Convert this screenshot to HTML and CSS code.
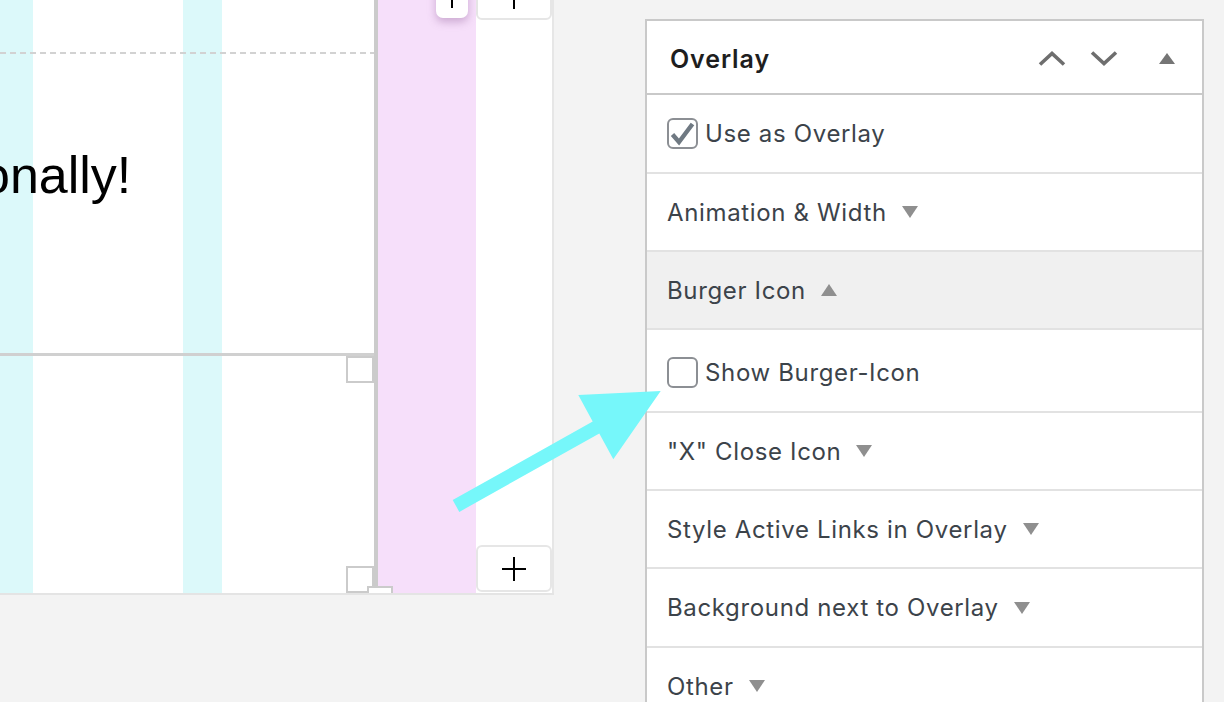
FILE: index.html
```html
<!DOCTYPE html>
<html lang="en">
<head>
<meta charset="utf-8">
<title>Overlay settings</title>
<link rel="stylesheet" href="styles.css">
</head>
<body>
<div class="page">
  <div class="canvas">
    <div class="editor">
      <div class="block-top">
        <div class="dash"></div>
        <p class="big">onally!</p>
      </div>
      <div class="block-bottom">
        <span class="handle handle-tr"></span>
        <span class="handle handle-br"></span>
        <span class="tab-bottom"></span>
      </div>
    </div>
    <div class="pink">
      <span class="float-tab">
        <svg class="plus-sm" viewBox="0 0 20 20" width="20" height="20"><path d="M10 0V20M0 10H20" stroke="#000" stroke-width="2"/></svg>
      </span>
    </div>
    <div class="side">
      <div class="add add-top">
        <svg viewBox="0 0 24 24" width="24" height="24"><path d="M12 0V24M0 12H24" stroke="#000" stroke-width="2"/></svg>
      </div>
      <div class="add add-bottom">
        <svg viewBox="0 0 24 24" width="24" height="24"><path d="M12 0V24M0 12H24" stroke="#000" stroke-width="2"/></svg>
      </div>
    </div>
  </div>

  <aside class="panel">
    <div class="panel-head">
      <h2 class="panel-title">Overlay</h2>
      <div class="head-icons">
        <svg class="chev" viewBox="0 0 28 15" width="28" height="15"><polyline points="2,13.5 14,2.5 26,13.5" fill="none" stroke="#6e6e6e" stroke-width="3.6"/></svg>
        <svg class="chev chev-down" viewBox="0 0 28 15" width="28" height="15"><polyline points="2,1.5 14,12.5 26,1.5" fill="none" stroke="#6e6e6e" stroke-width="3.6"/></svg>
        <svg class="head-tri" viewBox="0 0 16 11" width="16" height="11"><polygon points="8,0 16,11 0,11" fill="#757575"/></svg>
      </div>
    </div>
    <div class="row row-first">
      <span class="checkbox">
        <svg viewBox="0 0 27 27" width="27" height="27"><path d="M3.5 14.5 L10 22 L23.5 4" fill="none" stroke="#6f7982" stroke-width="4.4" stroke-linejoin="miter"/></svg>
      </span>
      <span>Use as Overlay</span>
    </div>
    <div class="row">
      <span>Animation &amp; Width</span>
      <svg class="caret" viewBox="0 0 16 12" width="16" height="12"><polygon points="0,0 16,0 8,12" fill="#8f8f8f"/></svg>
    </div>
    <div class="row row-open">
      <span>Burger Icon</span>
      <svg class="caret" viewBox="0 0 16 12" width="16" height="12"><polygon points="8,0 16,12 0,12" fill="#8f8f8f"/></svg>
    </div>
    <div class="row row-tall">
      <span class="checkbox"></span>
      <span>Show Burger-Icon</span>
    </div>
    <div class="row">
      <span>"X" Close Icon</span>
      <svg class="caret" viewBox="0 0 16 12" width="16" height="12"><polygon points="0,0 16,0 8,12" fill="#8f8f8f"/></svg>
    </div>
    <div class="row">
      <span>Style Active Links in Overlay</span>
      <svg class="caret" viewBox="0 0 16 12" width="16" height="12"><polygon points="0,0 16,0 8,12" fill="#8f8f8f"/></svg>
    </div>
    <div class="row row-79">
      <span>Background next to Overlay</span>
      <svg class="caret" viewBox="0 0 16 12" width="16" height="12"><polygon points="0,0 16,0 8,12" fill="#8f8f8f"/></svg>
    </div>
    <div class="row">
      <span>Other</span>
      <svg class="caret" viewBox="0 0 16 12" width="16" height="12"><polygon points="0,0 16,0 8,12" fill="#8f8f8f"/></svg>
    </div>
  </aside>
</div>

<svg class="arrow" viewBox="0 0 1224 702" width="1224" height="702">
  <polygon points="452.7,500.1 592.7,421.6 578.3,395 660.7,391 613.3,459.3 599.3,433.4 459.3,511.9" fill="#76f7fa"/>
</svg>
</body>
</html>
```

FILE: styles.css
```css
* { box-sizing: border-box; }

html, body { margin: 0; padding: 0; }

body {
  width: 1224px;
  height: 702px;
  overflow: hidden;
  position: relative;
  background: #f3f3f3;
  font-family: Inter, "Noto Sans", sans-serif;
}

.page {
  display: flex;
  align-items: flex-start;
}

/* ---------- left canvas ---------- */
.canvas {
  display: flex;
  height: 595px;
  border-bottom: 2px solid #e4e4e4;
}

.editor {
  width: 378px;
  border-right: 4px solid #cbcbcb;
  display: flex;
  flex-direction: column;
  position: relative;
  background: linear-gradient(to right,
    #dcf9fa 0, #dcf9fa 33px,
    #ffffff 33px, #ffffff 183px,
    #dcf9fa 183px, #dcf9fa 222px,
    #ffffff 222px);
}

.block-top { height: 353px; }

.dash {
  height: 2px;
  margin-top: 52px;
  background: repeating-linear-gradient(to right, #d2d2d2 0, #d2d2d2 6px, transparent 6px, transparent 10px);
}

.big {
  margin: 91px 0 0 -19px;
  font-family: "Liberation Sans", Arial, sans-serif;
  font-size: 52px;
  line-height: 60px;
  color: #000;
  white-space: nowrap;
}

.block-bottom {
  flex: 1;
  position: relative;
  border-top: 3px solid #d0d0d0;
}

.handle {
  position: absolute;
  right: 0;
  width: 28px;
  height: 27px;
  border: 2px solid #cbcbcb;
  background: #fff;
}
.handle-tr { top: 0; }
.handle-br { bottom: 0; }

.tab-bottom {
  position: absolute;
  right: -19px;
  bottom: 0;
  width: 26px;
  height: 7px;
  background: #fff;
  border: 2px solid #cbcbcb;
  border-bottom: none;
  z-index: 2;
}

.pink {
  width: 98px;
  background: #f6dffa;
  position: relative;
}

.float-tab {
  position: absolute;
  left: 58px;
  top: -22px;
  width: 32px;
  height: 40px;
  background: #fff;
  border-radius: 7px;
  box-shadow: 0 4px 9px rgba(140, 90, 150, 0.4);
  display: flex;
  align-items: center;
  justify-content: center;
}

.side {
  width: 78px;
  background: #fff;
  border-right: 2px solid #e6e6e6;
  display: flex;
  flex-direction: column;
  justify-content: space-between;
}

.add {
  height: 47px;
  border: 2px solid #e6e6e6;
  border-radius: 6px;
  background: #fff;
  display: flex;
  align-items: center;
  justify-content: center;
}
.add-top { margin-top: -27px; }
.add-bottom { margin-bottom: 1px; }

/* ---------- right panel ---------- */
.panel {
  width: 559px;
  margin-left: 91px;
  margin-top: 19px;
  border: 2px solid #c9c9c9;
  border-bottom: none;
  background: #fff;
  flex: none;
}

.panel-head {
  height: 74px;
  border-bottom: 2px solid #c9c9c9;
  display: flex;
  align-items: center;
  padding: 3px 27px 0 23px;
}

.panel-title {
  flex: 1;
  margin: 0;
  font-size: 25px;
  font-weight: 600;
  letter-spacing: 0.9px;
  color: #1e1e1e;
}

.head-icons {
  display: flex;
  align-items: center;
}
.chev-down { margin-left: 24px; }
.head-tri { margin-left: 41px; }

.row {
  display: flex;
  align-items: center;
  height: 78px;
  padding-left: 20px;
  border-bottom: 2px solid #e2e2e2;
  font-size: 24px;
  letter-spacing: 0.65px;
  color: #3c434a;
  white-space: nowrap;
}
.row-first { height: 79px; }
.row-79 { height: 79px; }
.row-tall { height: 83px; padding-top: 3px; }
.row-open { background: #f0f0f0; }

.caret { margin-left: 15px; flex: none; }

.checkbox {
  width: 31px;
  height: 31px;
  border: 2px solid #8c8f94;
  border-radius: 6px;
  background: #fff;
  margin-right: 7px;
  flex: none;
  display: flex;
}

/* ---------- annotation arrow ---------- */
.arrow {
  position: absolute;
  left: 0;
  top: 0;
  pointer-events: none;
}
```
